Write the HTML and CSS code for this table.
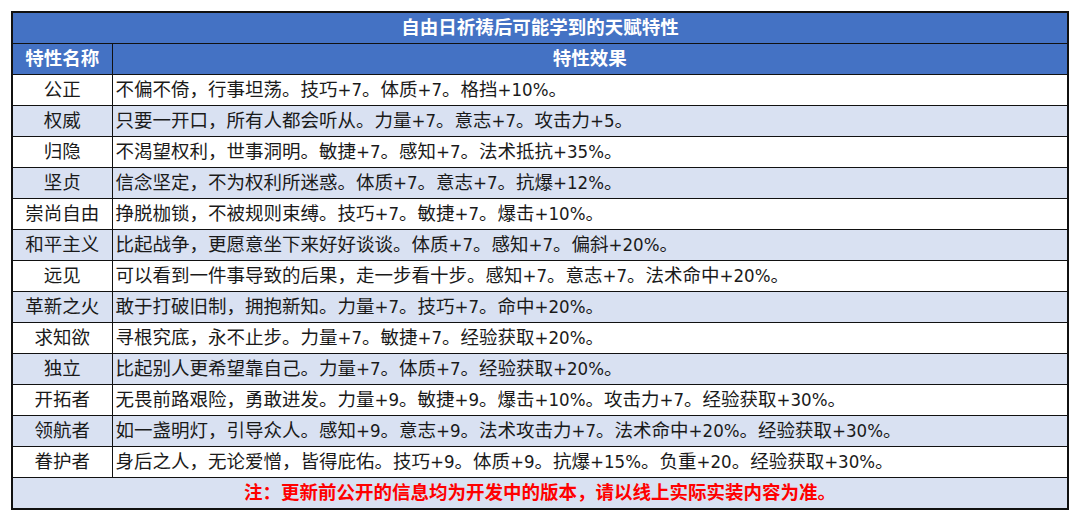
FILE: index.html
```html
<!DOCTYPE html>
<html lang="zh-CN">
<head>
<meta charset="utf-8">
<link rel="stylesheet" href="styles.css">
</head>
<body>
<table class="traits">
  <colgroup><col class="col-name"><col class="col-effect"></colgroup>
  <thead>
    <tr class="title-row"><th colspan="2">自由日祈祷后可能学到的天赋特性</th></tr>
    <tr class="head-row"><th>特性名称</th><th>特性效果</th></tr>
  </thead>
  <tbody>
    <tr><td class="name">公正</td><td class="effect">不偏不倚，行事坦荡。技巧+7。体质+7。格挡+10%。</td></tr>
    <tr class="alt"><td class="name">权威</td><td class="effect">只要一开口，所有人都会听从。力量+7。意志+7。攻击力+5。</td></tr>
    <tr><td class="name">归隐</td><td class="effect">不渴望权利，世事洞明。敏捷+7。感知+7。法术抵抗+35%。</td></tr>
    <tr class="alt"><td class="name">坚贞</td><td class="effect">信念坚定，不为权利所迷惑。体质+7。意志+7。抗爆+12%。</td></tr>
    <tr><td class="name">崇尚自由</td><td class="effect">挣脱枷锁，不被规则束缚。技巧+7。敏捷+7。爆击+10%。</td></tr>
    <tr class="alt"><td class="name">和平主义</td><td class="effect">比起战争，更愿意坐下来好好谈谈。体质+7。感知+7。偏斜+20%。</td></tr>
    <tr><td class="name">远见</td><td class="effect">可以看到一件事导致的后果，走一步看十步。感知+7。意志+7。法术命中+20%。</td></tr>
    <tr class="alt"><td class="name">革新之火</td><td class="effect">敢于打破旧制，拥抱新知。力量+7。技巧+7。命中+20%。</td></tr>
    <tr><td class="name">求知欲</td><td class="effect">寻根究底，永不止步。力量+7。敏捷+7。经验获取+20%。</td></tr>
    <tr class="alt"><td class="name">独立</td><td class="effect">比起别人更希望靠自己。力量+7。体质+7。经验获取+20%。</td></tr>
    <tr><td class="name">开拓者</td><td class="effect">无畏前路艰险，勇敢进发。力量+9。敏捷+9。爆击+10%。攻击力+7。经验获取+30%。</td></tr>
    <tr class="alt"><td class="name">领航者</td><td class="effect">如一盏明灯，引导众人。感知+9。意志+9。法术攻击力+7。法术命中+20%。经验获取+30%。</td></tr>
    <tr><td class="name">眷护者</td><td class="effect">身后之人，无论爱憎，皆得庇佑。技巧+9。体质+9。抗爆+15%。负重+20。经验获取+30%。</td></tr>
    <tr class="alt note-row"><td colspan="2">注：更新前公开的信息均为开发中的版本，请以线上实际实装内容为准。</td></tr>
  </tbody>
</table>
</body>
</html>
```
FILE: styles.css
```css
html, body {
  margin: 0;
  padding: 0;
  background: #ffffff;
}
body {
  padding: 11px 0 0 11px;
  font-family: "DejaVu Sans Condensed", "Open Sans", "Noto Sans CJK SC", sans-serif;
  font-size: 18.5px;
  color: #1a1a1a;
}
.traits {
  border-collapse: collapse;
  table-layout: fixed;
  width: 1058px;
  border: 2px solid #111;
}
.col-name { width: 100px; }
.traits th,
.traits td {
  border: 1px solid #111;
  height: 30px;
  padding: 0 3px;
  line-height: 30px;
  white-space: nowrap;
  overflow: hidden;
}
.title-row th,
.head-row th {
  background: #4472c4;
  color: #ffffff;
  font-weight: 700;
  text-align: center;
}
.traits td.name { text-align: center; }
.traits td.effect { text-align: left; }
.traits tr.alt td { background: #d9e1f2; }
.note-row td {
  text-align: center;
  color: #ff0000;
  font-weight: 700;
}
```
